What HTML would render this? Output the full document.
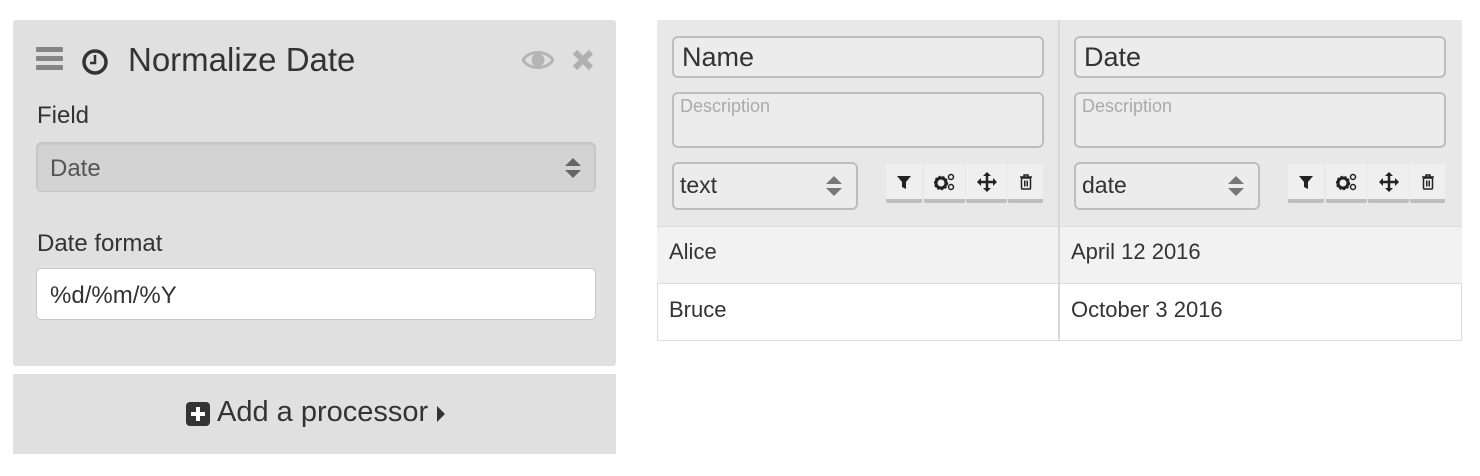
<!DOCTYPE html>
<html><head><meta charset="utf-8"><style>
*{box-sizing:border-box;margin:0;padding:0}
body{width:1480px;height:476px;background:#fff;font-family:"Liberation Sans",sans-serif;color:#333;position:relative;overflow:hidden}
.a{position:absolute}
.panel{background:#e0e0e0;border-radius:3px}
.inp{position:absolute;border:2px solid #bdbdbd;border-radius:6px;background:#ececec}
.txt{position:absolute;white-space:nowrap}
.btn{position:absolute;top:164px;height:39px;background:#efefef;border-bottom:4px solid #bdbdbd;border-radius:2px}
.btn svg{position:absolute;left:50%;top:50%;transform:translate(-50%,-50%)}
</style></head><body>
<div class="a panel" style="left:13px;top:20px;width:603px;height:346px"></div>
<svg class="a" style="left:36px;top:47px" width="28" height="26"><rect x="0" y="0" width="27" height="5" rx="1" fill="#858585"/><rect x="0" y="9" width="27" height="5" rx="1" fill="#858585"/><rect x="0" y="18" width="27" height="5" rx="1" fill="#858585"/></svg>
<svg class="a" style="left:80px;top:47px" width="30" height="30"><circle cx="15" cy="15" r="11" fill="none" stroke="#333" stroke-width="3.5"/><path d="M15 8v8h-5" fill="none" stroke="#333" stroke-width="2.5"/></svg>
<div class="txt" style="left:128px;top:41px;font-size:33px;color:#333">Normalize Date</div>
<svg class="a" style="left:522px;top:48px" width="32" height="24"><path d="M1 12C7 2 25 2 31 12C25 22 7 22 1 12Z" fill="none" stroke="#b5b5b5" stroke-width="3"/><circle cx="16" cy="12" r="6.5" fill="#b5b5b5"/></svg>
<svg class="a" style="left:572px;top:49px" width="22" height="22"><path d="M3 3L19 19M19 3L3 19" stroke="#b0b0b0" stroke-width="6"/></svg>
<div class="txt" style="left:37px;top:102px;font-size:24px">Field</div>
<div class="a" style="left:36px;top:142px;width:560px;height:50px;background:#d3d3d3;border:1px solid #c4c4c4;border-radius:6px;box-shadow:inset 0 1px 2px rgba(0,0,0,.1)"></div>
<div class="txt" style="left:50px;top:155px;font-size:24px;color:#555">Date</div>
<svg class="a" style="left:563px;top:156px" width="20" height="24"><path d="M2 10L10 2L18 10Z M2 14L10 22L18 14Z" fill="#666"/></svg>
<div class="txt" style="left:37px;top:230px;font-size:24px">Date format</div>
<div class="a" style="left:36px;top:268px;width:560px;height:52px;background:#fff;border:1px solid #c8c8c8;border-radius:5px"></div>
<div class="txt" style="left:50px;top:282px;font-size:24px">%d/%m/%Y</div>
<div class="a panel" style="left:13px;top:374px;width:603px;height:80px;border-radius:0"></div>
<svg class="a" style="left:186px;top:402px" width="24" height="24"><rect x="0" y="0" width="24" height="24" rx="4" fill="#333"/><path d="M12 5v14M5 12h14" stroke="#fff" stroke-width="4"/></svg>
<div class="txt" style="left:217px;top:396px;font-size:29px;color:#333">Add a processor</div>
<svg class="a" style="left:436px;top:405px" width="10" height="18"><path d="M1 1L9 9L1 17Z" fill="#333"/></svg>

<div class="a" style="left:657px;top:20px;width:805px;height:206px;background:#e8e8e8"></div>
<div class="a" style="left:657px;top:226px;width:805px;height:57px;background:#f2f2f2;border-top:1px solid #ddd"></div>
<div class="a" style="left:657px;top:283px;width:805px;height:58px;background:#fff;border:1px solid #ddd"></div>
<div class="a" style="left:1058px;top:20px;width:2px;height:321px;background:#d8d8d8"></div>

<div class="inp" style="left:672px;top:36px;width:372px;height:42px"></div>
<div class="txt" style="left:682px;top:42px;font-size:27px">Name</div>
<div class="inp" style="left:672px;top:92px;width:372px;height:56px"></div>
<div class="txt" style="left:680px;top:96px;font-size:18px;color:#aaa">Description</div>
<div class="inp" style="left:672px;top:162px;width:186px;height:48px"></div>
<div class="txt" style="left:680px;top:172px;font-size:23px">text</div>
<svg class="a" style="left:824px;top:174px" width="20" height="24"><path d="M2 10L10 2L18 10Z M2 14L10 22L18 14Z" fill="#777"/></svg>

<div class="inp" style="left:1074px;top:36px;width:372px;height:42px"></div>
<div class="txt" style="left:1084px;top:42px;font-size:27px">Date</div>
<div class="inp" style="left:1074px;top:92px;width:372px;height:56px"></div>
<div class="txt" style="left:1082px;top:96px;font-size:18px;color:#aaa">Description</div>
<div class="inp" style="left:1074px;top:162px;width:186px;height:48px"></div>
<div class="txt" style="left:1082px;top:172px;font-size:23px">date</div>
<svg class="a" style="left:1226px;top:174px" width="20" height="24"><path d="M2 10L10 2L18 10Z M2 14L10 22L18 14Z" fill="#777"/></svg>

<div class="btn" style="left:886px;width:36px"><svg width="16" height="16"><path d="M1 2h14l-5 6v7l-4-2V8Z" fill="#222"/></svg></div>
<div class="btn" style="left:924px;width:41px"><svg width="22" height="18"><circle cx="7" cy="10" r="5" fill="none" stroke="#222" stroke-width="3"/><circle cx="7" cy="10" r="6.5" fill="none" stroke="#222" stroke-width="1.5" stroke-dasharray="2 2"/><circle cx="17" cy="4" r="2.5" fill="none" stroke="#222" stroke-width="1.5"/><circle cx="17" cy="14" r="2.5" fill="none" stroke="#222" stroke-width="1.5"/></svg></div>
<div class="btn" style="left:966px;width:41px"><svg width="20" height="20"><path d="M10 1v18M1 10h18" stroke="#222" stroke-width="2.5"/><path d="M10 0l4 4h-8ZM10 20l4-4h-8ZM0 10l4 4v-8ZM20 10l-4 4v-8Z" fill="#222"/></svg></div>
<div class="btn" style="left:1008px;width:35px"><svg width="14" height="16"><path d="M1 3h12M5 3V1h4v2" fill="none" stroke="#222" stroke-width="1.5"/><rect x="2.5" y="4" width="9" height="11" rx="1" fill="none" stroke="#222" stroke-width="1.5"/><path d="M5.5 6.5v6M7 6.5v6M8.5 6.5v6" stroke="#222" stroke-width="1"/></svg></div>

<div class="btn" style="left:1288px;width:36px"><svg width="16" height="16"><path d="M1 2h14l-5 6v7l-4-2V8Z" fill="#222"/></svg></div>
<div class="btn" style="left:1326px;width:41px"><svg width="22" height="18"><circle cx="7" cy="10" r="5" fill="none" stroke="#222" stroke-width="3"/><circle cx="7" cy="10" r="6.5" fill="none" stroke="#222" stroke-width="1.5" stroke-dasharray="2 2"/><circle cx="17" cy="4" r="2.5" fill="none" stroke="#222" stroke-width="1.5"/><circle cx="17" cy="14" r="2.5" fill="none" stroke="#222" stroke-width="1.5"/></svg></div>
<div class="btn" style="left:1368px;width:41px"><svg width="20" height="20"><path d="M10 1v18M1 10h18" stroke="#222" stroke-width="2.5"/><path d="M10 0l4 4h-8ZM10 20l4-4h-8ZM0 10l4 4v-8ZM20 10l-4 4v-8Z" fill="#222"/></svg></div>
<div class="btn" style="left:1410px;width:35px"><svg width="14" height="16"><path d="M1 3h12M5 3V1h4v2" fill="none" stroke="#222" stroke-width="1.5"/><rect x="2.5" y="4" width="9" height="11" rx="1" fill="none" stroke="#222" stroke-width="1.5"/><path d="M5.5 6.5v6M7 6.5v6M8.5 6.5v6" stroke="#222" stroke-width="1"/></svg></div>

<div class="txt" style="left:669px;top:239px;font-size:22px">Alice</div>
<div class="txt" style="left:1071px;top:239px;font-size:22px">April 12 2016</div>
<div class="txt" style="left:669px;top:297px;font-size:22px">Bruce</div>
<div class="txt" style="left:1071px;top:297px;font-size:22px">October 3 2016</div>
</body></html>
